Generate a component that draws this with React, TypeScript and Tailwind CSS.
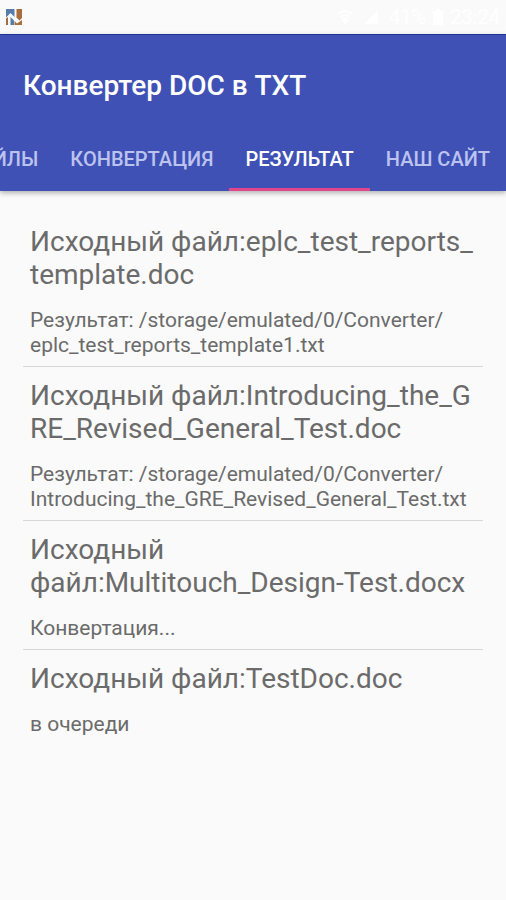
import React from "react";

type Tab = { label: string; active?: boolean };
type Job = { source: string[]; status: string[] };

const tabs: Tab[] = [
  { label: "ФАЙЛЫ" },
  { label: "КОНВЕРТАЦИЯ" },
  { label: "РЕЗУЛЬТАТ", active: true },
  { label: "НАШ САЙТ" },
];

const jobs: Job[] = [
  {
    source: ["Исходный файл:eplc_test_reports_", "template.doc"],
    status: ["Результат: /storage/emulated/0/Converter/", "eplc_test_reports_template1.txt"],
  },
  {
    source: ["Исходный файл:Introducing_the_G", "RE_Revised_General_Test.doc"],
    status: ["Результат: /storage/emulated/0/Converter/", "Introducing_the_GRE_Revised_General_Test.txt"],
  },
  { source: ["Исходный", "файл:Multitouch_Design-Test.docx"], status: ["Конвертация..."] },
  { source: ["Исходный файл:TestDoc.doc"], status: ["в очереди"] },
];

function AppIcon() {
  return (
    <svg viewBox="0 0 16 16" className="h-4 w-4" aria-hidden="true">
      <rect width="16" height="16" fill="#fafafa" />
      <path d="M0 0H8.500V8L4.500 4L0 8.500Z" fill="#567cab" />
      <path d="M10.500 0H16V9L13.500 11.500L10.500 8.500Z" fill="#a86d3c" />
      <path d="M0 9.500L2 8V16H0Z" fill="#a86d3c" />
      <path d="M4.500 8L8 11.500V16H4.500Z" fill="#567cab" />
      <path d="M8.500 12L11 14.500L16 11V16H8.500Z" fill="#a86d3c" />
    </svg>
  );
}

function StatusBar() {
  return (
    <div className="flex h-[34px] items-center justify-between bg-[#fafafa] px-1.5">
      <AppIcon />
      <div className="flex items-center gap-1.5 text-xl text-white">
        <svg viewBox="0 0 16 16" className="h-4 w-4" fill="none" stroke="currentColor" strokeWidth="2" aria-hidden="true">
          <path d="M1 5Q8 -1 15 5M3.500 8Q8 4 12.500 8M6 11Q8 9 10 11L8 14Z" />
        </svg>
        <svg viewBox="0 0 16 16" className="mx-1 h-4 w-4" fill="currentColor" aria-hidden="true">
          <path d="M15 1V15H1Z" />
        </svg>
        <span>41%</span>
        <svg viewBox="0 0 12 16" className="h-4 w-3" fill="currentColor" aria-hidden="true">
          <path d="M4 0H8V2H11V16H1V2H4Z" />
        </svg>
        <span>23:24</span>
      </div>
    </div>
  );
}

function Lines({ lines }: { lines: string[] }) {
  return (
    <>
      {lines.map((line) => (
        <span key={line} className="block wrap-break-word">
          {line}
        </span>
      ))}
    </>
  );
}

export default function App() {
  return (
    <div className="min-h-screen bg-[#fafafa] font-['Roboto','Noto_Sans',sans-serif] text-[#6b6b6b]">
      <StatusBar />
      <header className="border-t border-[#1f3399] bg-[#3f51b5] shadow-[0_2px_5px_rgba(0,0,0,0.3)]">
        <h1 className="flex h-[102px] items-center px-[23px] text-[28px] font-medium text-white">
          Конвертер DOC в TXT
        </h1>
        <nav className="flex h-[54px] justify-end overflow-hidden">
          {tabs.map((tab) => (
            <button
              key={tab.label}
              type="button"
              className={
                tab.active
                  ? "shrink-0 border-b-3 border-[#e0468c] px-4 pb-2 text-[20px] leading-7 font-medium whitespace-nowrap text-white"
                  : "shrink-0 border-b-3 border-transparent px-4 pb-2 text-[20px] leading-7 font-medium whitespace-nowrap text-[#bcc3ef]"
              }
            >
              {tab.label}
            </button>
          ))}
        </nav>
      </header>
      <main className="px-[23px] pt-[22px]">
        <ul className="divide-y divide-[#d8d8d8]">
          {jobs.map((job) => (
            <li key={job.source.join("")} className="px-[7px] pt-3 pb-2">
              <h2 className="text-[28px] leading-[33px]">
                <Lines lines={job.source} />
              </h2>
              <p className="mt-[17px] text-[21px] leading-[25px]">
                <Lines lines={job.status} />
              </p>
            </li>
          ))}
        </ul>
      </main>
    </div>
  );
}
